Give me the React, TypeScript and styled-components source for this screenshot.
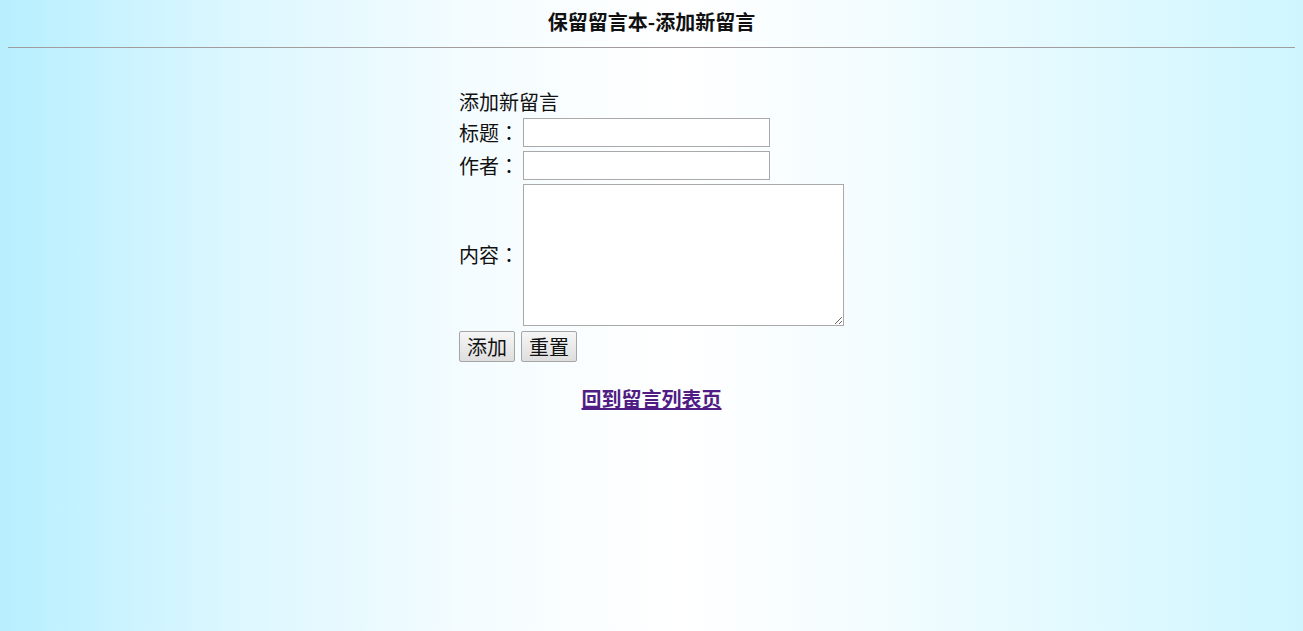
import React from 'react';
import styled, { createGlobalStyle } from 'styled-components';

const GlobalStyle = createGlobalStyle`
    html, body {
        margin: 0;
        padding: 0;
        height: 100%;
    }
    body {
        background: linear-gradient(90deg, #b7efff 0%, #dcf7ff 18%, #f4fcff 36%, #ffffff 52%, #f2fcff 68%, #def9ff 86%, #cff6ff 100%);
        font-family: "Noto Sans CJK SC", "Microsoft YaHei", sans-serif;
        color: #111;
        min-height: 631px;
    }
`;

const Page = styled.div`
    min-height: 631px;
    padding: 8px 8px 0;
    box-sizing: border-box;
`;

const Title = styled.h3`
    margin: 0;
    font-size: 20px;
    line-height: 28px;
    font-weight: 700;
    text-align: center;
`;

const Rule = styled.hr`
    margin: 11px 0 0;
    border: 0;
    border-top: 1px solid #a39c9c;
    height: 0;
`;

const Form = styled.form`
    width: 385px;
    margin: 40px auto 0;
    display: grid;
    grid-template-columns: 64px 1fr;
    row-gap: 4px;
    align-items: center;
    font-size: 20px;
`;

const FormHead = styled.div`
    grid-column: 1 / 3;
    line-height: 28px;
    margin-bottom: -2px;
`;

const Label = styled.label`
    line-height: 28px;
    white-space: nowrap;
`;

// full-width colon drawn centred, as in the original font
const Colon = styled.span`
    font-family: "Noto Sans CJK JP", "Noto Sans CJK SC", sans-serif;
`;

const TextInput = styled.input`
    width: 247px;
    height: 29px;
    box-sizing: border-box;
    border: 1px solid #a9a9a9;
    background: #fff;
    padding: 2px 4px;
    font-size: 16px;
    font-family: inherit;
    outline: none;
`;

const TextArea = styled.textarea`
    width: 321px;
    height: 142px;
    box-sizing: border-box;
    border: 1px solid #a9a9a9;
    background: #fff;
    padding: 2px 4px;
    font-size: 16px;
    font-family: inherit;
    outline: none;
    display: block;
`;

const Buttons = styled.div`
    grid-column: 1 / 3;
    display: flex;
    gap: 6px;
    margin-top: 1px;
`;

const Button = styled.button`
    height: 31px;
    padding: 0 7px;
    font-size: 20px;
    line-height: 27px;
    font-family: inherit;
    color: #111;
    border: 1px solid #a5a5a5;
    border-radius: 2px;
    background: linear-gradient(#f6f6f6, #dedede);
    box-sizing: border-box;
`;

const BackLink = styled.a`
    display: block;
    width: fit-content;
    margin: 23px auto 0;
    font-size: 20px;
    line-height: 28px;
    font-weight: 700;
    color: #4f1d84;
    text-decoration: underline;
`;

export default function App() {
    return (
        <Page>
            <GlobalStyle />
            <Title>保留留言本-添加新留言</Title>
            <Rule />
            <Form onSubmit={(e) => e.preventDefault()}>
                <FormHead>添加新留言</FormHead>
                <Label htmlFor="title">标题<Colon>：</Colon></Label>
                <TextInput id="title" type="text" />
                <Label htmlFor="author">作者<Colon>：</Colon></Label>
                <TextInput id="author" type="text" />
                <Label htmlFor="content">内容<Colon>：</Colon></Label>
                <TextArea id="content" />
                <Buttons>
                    <Button type="submit">添加</Button>
                    <Button type="reset">重置</Button>
                </Buttons>
            </Form>
            <BackLink href="#">回到留言列表页</BackLink>
        </Page>
    );
}
